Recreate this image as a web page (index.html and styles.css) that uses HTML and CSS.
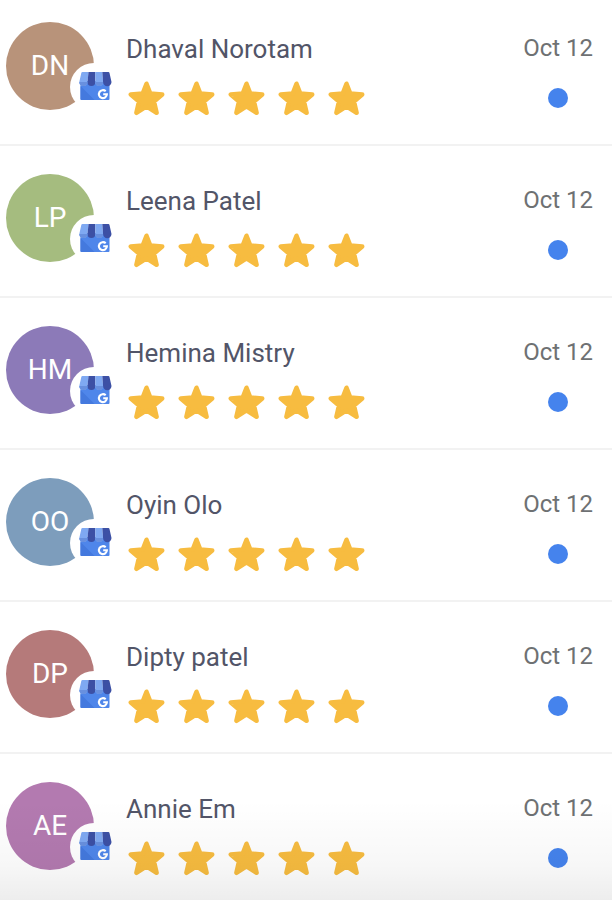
FILE: index.html
```html
<!DOCTYPE html>
<html lang="en">
<head>
<meta charset="utf-8">
<meta name="viewport" content="width=device-width, initial-scale=1">
<title>Reviews</title>
<link rel="stylesheet" href="styles.css">
</head>
<body>
<svg class="sprite" aria-hidden="true">
  <symbol id="star" viewBox="0 0 37 35">
    <path d="M18.5 2.700 22.3 12.6 34.200 13.5 26 20.5 28.6 31.8 18.5 25.3 8.4 31.8 11 20.5 2.800 13.5 14.7 12.6Z" fill="currentColor" stroke="currentColor" stroke-width="4.500" stroke-linejoin="round"/>
  </symbol>
  <symbol id="store" viewBox="0 0 33 29">
    <path d="M1.500 9H30.500V27Q30.500 28 29.500 28H2.500Q1.500 28 1.500 27Z" fill="#4f86ea"/>
    <path d="M1.500 14 15.500 28H2.500Q1.500 28 1.500 27Z" fill="#4479de"/>
    <path d="M3.500 0H9.500L8.500 10a4 4 0 0 1-8.200 0L2.300 1Q2.500 0 3.500 0Z" fill="#7fa9f2"/>
    <path d="M9.500 0H16.300V10a3.900 3.900 0 0 1-7.800 0Z" fill="#3c50a5"/>
    <path d="M16.300 0H23.300L24.100 10a3.900 3.900 0 0 1-7.800 0Z" fill="#7fa9f2"/>
    <path d="M23.300 0H29.500Q30.300 0 30.500 1L32.500 10a4.100 4.100 0 0 1-8.400 0Z" fill="#3c50a5"/>
    <path d="M0.300 10H8.500a4 4 0 0 1-8.200 0ZM16.300 10H24.100a3.900 3.900 0 0 1-7.800 0Z" fill="#6890df"/>
    <path d="M26.700 19.300A4 4 0 1 0 27.900 22.300H24.200" fill="none" stroke="#fff" stroke-width="2.100"/>
  </symbol>
</svg>
<main>
<ul class="reviews">
  <li class="review">
    <div class="avatar tan">DN<span class="badge"><svg><use href="#store"/></svg></span></div>
    <div class="body"><h2 class="name">Dhaval Norotam</h2><div class="stars" role="img" aria-label="5 stars"><svg><use href="#star"/></svg><svg><use href="#star"/></svg><svg><use href="#star"/></svg><svg><use href="#star"/></svg><svg><use href="#star"/></svg></div></div>
    <div class="meta"><time>Oct 12</time><span class="unread"></span></div>
  </li>
  <li class="review">
    <div class="avatar green">LP<span class="badge"><svg><use href="#store"/></svg></span></div>
    <div class="body"><h2 class="name">Leena Patel</h2><div class="stars" role="img" aria-label="5 stars"><svg><use href="#star"/></svg><svg><use href="#star"/></svg><svg><use href="#star"/></svg><svg><use href="#star"/></svg><svg><use href="#star"/></svg></div></div>
    <div class="meta"><time>Oct 12</time><span class="unread"></span></div>
  </li>
  <li class="review">
    <div class="avatar purple">HM<span class="badge"><svg><use href="#store"/></svg></span></div>
    <div class="body"><h2 class="name">Hemina Mistry</h2><div class="stars" role="img" aria-label="5 stars"><svg><use href="#star"/></svg><svg><use href="#star"/></svg><svg><use href="#star"/></svg><svg><use href="#star"/></svg><svg><use href="#star"/></svg></div></div>
    <div class="meta"><time>Oct 12</time><span class="unread"></span></div>
  </li>
  <li class="review">
    <div class="avatar blue">OO<span class="badge"><svg><use href="#store"/></svg></span></div>
    <div class="body"><h2 class="name">Oyin Olo</h2><div class="stars" role="img" aria-label="5 stars"><svg><use href="#star"/></svg><svg><use href="#star"/></svg><svg><use href="#star"/></svg><svg><use href="#star"/></svg><svg><use href="#star"/></svg></div></div>
    <div class="meta"><time>Oct 12</time><span class="unread"></span></div>
  </li>
  <li class="review">
    <div class="avatar red">DP<span class="badge"><svg><use href="#store"/></svg></span></div>
    <div class="body"><h2 class="name">Dipty patel</h2><div class="stars" role="img" aria-label="5 stars"><svg><use href="#star"/></svg><svg><use href="#star"/></svg><svg><use href="#star"/></svg><svg><use href="#star"/></svg><svg><use href="#star"/></svg></div></div>
    <div class="meta"><time>Oct 12</time><span class="unread"></span></div>
  </li>
  <li class="review">
    <div class="avatar orchid">AE<span class="badge"><svg><use href="#store"/></svg></span></div>
    <div class="body"><h2 class="name">Annie Em</h2><div class="stars" role="img" aria-label="5 stars"><svg><use href="#star"/></svg><svg><use href="#star"/></svg><svg><use href="#star"/></svg><svg><use href="#star"/></svg><svg><use href="#star"/></svg></div></div>
    <div class="meta"><time>Oct 12</time><span class="unread"></span></div>
  </li>
</ul>
</main>
</body>
</html>
```
FILE: styles.css
```css
* { box-sizing: border-box; }

body {
  margin: 0;
  background: #fff;
  font-family: Roboto, sans-serif;
}

.sprite {
  position: absolute;
  width: 0;
  height: 0;
}

main { position: relative; }

/* Soft fade at the foot of the list */
main::after {
  content: "";
  position: absolute;
  right: 0;
  bottom: 0;
  left: 0;
  height: 100px;
  background: linear-gradient(rgba(0, 0, 0, 0), rgba(0, 0, 0, 0.03) 65%, rgba(0, 0, 0, 0.07));
  pointer-events: none;
}

.reviews {
  margin: 0;
  padding: 0;
  list-style: none;
}

.review {
  display: flex;
  align-items: flex-start;
  gap: 32px;
  padding: 28px 19px 28px 6px;
  border-bottom: 2px solid #f2f2f2;
}

.review:first-child { padding-top: 22px; }

.review:last-child {
  padding-bottom: 24px;
  border-bottom: 0;
}

.avatar {
  position: relative;
  flex: none;
  width: 88px;
  height: 88px;
  border-radius: 50%;
  color: #fff;
  font-size: 28px;
  line-height: 88px;
  text-align: center;
}

.tan { background: #b8937a; }
.green { background: #a5bc7f; }
.purple { background: #8c7ab8; }
.blue { background: #7d9dbc; }
.red { background: #b57a7a; }
.orchid { background: #b37ab0; }

.badge {
  position: absolute;
  top: 41px;
  left: 64px;
  display: flex;
  width: 48px;
  height: 48px;
  padding: 9px;
  border-radius: 50%;
  background: #fff;
}

.badge svg {
  flex: none;
  width: 33px;
  height: 29px;
}

.body {
  flex: 1;
  min-width: 0;
  padding-top: 11px;
}

.name {
  margin: 0;
  color: #525568;
  font-size: 26px;
  font-weight: 400;
  line-height: 32px;
}

.stars {
  display: flex;
  gap: 13px;
  padding: 16px 2px 0;
  color: #f7bc40;
}

.stars svg {
  flex: none;
  width: 37px;
  height: 35px;
}

.meta {
  display: flex;
  flex-direction: column;
  align-items: center;
  gap: 24px;
  padding-top: 10px;
  color: #6e7173;
  font-size: 24px;
  line-height: 32px;
}

.unread {
  width: 20px;
  height: 20px;
  border-radius: 50%;
  background: #4583ed;
}
```
